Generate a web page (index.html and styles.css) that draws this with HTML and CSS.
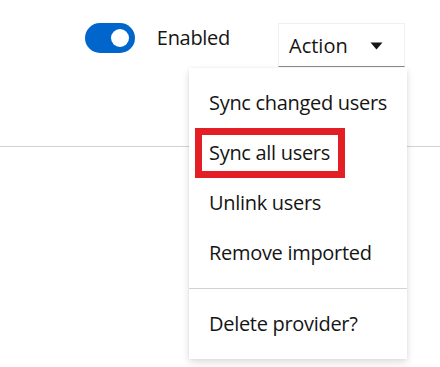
FILE: index.html
```html
<!DOCTYPE html>
<html lang="en">

<head>
    <meta charset="UTF-8">
    <meta name="viewport" content="width=device-width, initial-scale=1.0">
    <title>User federation provider</title>
    <link rel="stylesheet" href="styles.css">
</head>

<body>
    <div class="page">
        <div class="toolbar">
            <label class="switch">
                <span class="switch-toggle"><span class="switch-knob"></span></span>
                <span class="switch-label">Enabled</span>
            </label>

            <div class="dropdown">
                <button class="dropdown-toggle">
                    <span>Action</span>
                    <svg class="caret" width="13" height="8" viewBox="0 0 13 8">
                        <path d="M0.5 0.5 H12.5 L6.5 7.5 Z" fill="#151515" />
                    </svg>
                </button>

                <ul class="dropdown-menu">
                    <li class="menu-item">Sync changed users</li>
                    <li class="menu-item"><span class="highlight">Sync all users</span></li>
                    <li class="menu-item">Unlink users</li>
                    <li class="menu-item">Remove imported</li>
                    <li class="divider"></li>
                    <li class="menu-item">Delete provider?</li>
                </ul>
            </div>
        </div>

        <div class="rule"></div>
    </div>
</body>

</html>
```

FILE: styles.css
```css
html,
body {
    height: 100%;
}

body {
    margin: 0;
    background-color: #fff;
    font-family: "Open Sans", sans-serif;
    font-size: 20px;
    color: #151515;
}

.page {
    min-height: 100%;
}

.toolbar {
    display: flex;
    justify-content: flex-end;
    align-items: flex-start;
    padding: 23px 35px 0 0;
}

.switch {
    display: flex;
    align-items: center;
    height: 30px;
    margin-right: 48px;
}

.switch-toggle {
    position: relative;
    width: 50px;
    height: 30px;
    border-radius: 15px;
    background-color: #0066cc;
}

.switch-knob {
    position: absolute;
    top: 6px;
    right: 6px;
    width: 18px;
    height: 18px;
    border-radius: 50%;
    background-color: #fff;
}

.switch-label {
    margin-left: 22px;
    line-height: 30px;
    letter-spacing: -0.3px;
}

.dropdown {
    position: relative;
}

.dropdown-toggle {
    display: flex;
    align-items: center;
    justify-content: space-between;
    width: 127px;
    height: 44px;
    padding: 0 21px 0 10px;
    border: 1px solid #f0f0f0;
    border-bottom-color: #8a8d90;
    background-color: #fff;
    font-family: inherit;
    font-size: 20px;
    color: #151515;
}

.caret {
    margin-top: 2px;
}

.dropdown-menu {
    position: absolute;
    top: 45px;
    right: -2px;
    width: 218px;
    margin: 0;
    padding: 10px 0;
    list-style: none;
    background-color: #fff;
    box-shadow: 0 4px 8px rgba(3, 3, 3, 0.12), 0 0 4px rgba(3, 3, 3, 0.06);
    z-index: 1;
}

.menu-item {
    padding: 10px 20px;
    line-height: 30px;
    white-space: nowrap;
    letter-spacing: -0.3px;
}

.highlight {
    position: relative;
}

.highlight::before {
    content: "";
    position: absolute;
    left: -14px;
    right: -15px;
    top: -11px;
    bottom: -12px;
    border: 7px solid #e41e25;
}

.divider {
    height: 1px;
    margin: 10px 0;
    background-color: #d2d2d2;
}

.rule {
    margin-top: 79px;
    height: 1px;
    background-color: #d2d2d2;
}
```
